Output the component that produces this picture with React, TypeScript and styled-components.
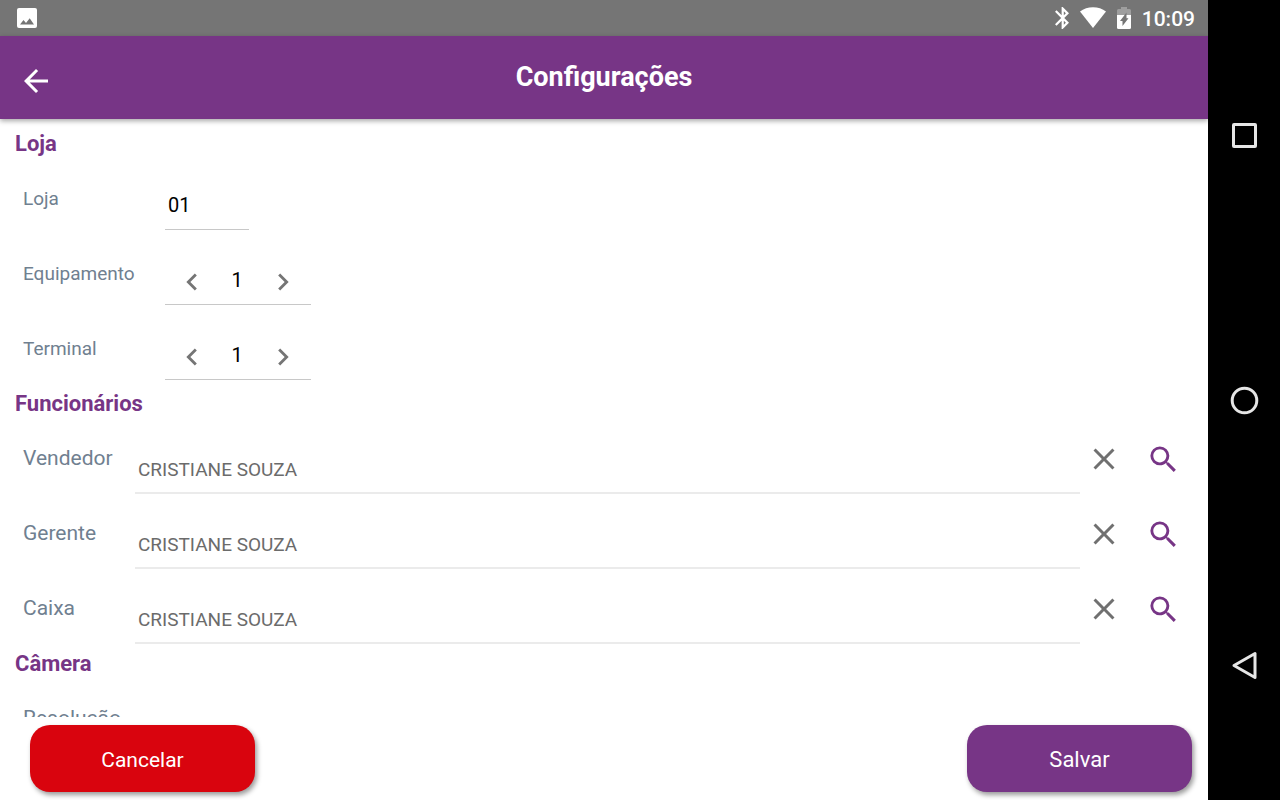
import React from "react";
import styled, { createGlobalStyle } from "styled-components";
import {
  MdArrowBack,
  MdChevronLeft,
  MdChevronRight,
  MdClose,
  MdSearch,
} from "react-icons/md";

const purple = "#773586";

const GlobalStyle = createGlobalStyle`
  * { box-sizing: border-box; }
  body { margin: 0; font-family: Roboto, "Liberation Sans", sans-serif; background: #fff; }
  button, input { font-family: inherit; margin: 0; padding: 0; border: 0; background: none; }
  button { cursor: pointer; }
  svg { display: block; }
`;

const Device = styled.div`
  display: grid;
  grid-template-columns: minmax(0, 1fr) 72px;
  height: 100vh;
`;

const Screen = styled.div`
  display: flex;
  flex-direction: column;
  min-height: 0;
  background: #fff;
`;

const StatusBar = styled.div`
  flex: none;
  display: flex;
  align-items: center;
  justify-content: space-between;
  height: 36px;
  padding: 0 13px 0 17px;
  background: #757575;
  color: #fff;
`;

const StatusIcons = styled.div`
  display: flex;
  align-items: center;
  gap: 11px;
`;

const Clock = styled.time`
  padding-top: 1px;
  font-size: 21px;
  font-weight: 500;
  line-height: 24px;
`;

const Header = styled.header`
  flex: none;
  position: relative;
  display: grid;
  grid-template-columns: 72px 1fr 72px;
  align-items: center;
  height: 83px;
  background: ${purple};
  color: #fff;
  box-shadow: 0 2px 5px rgba(0, 0, 0, 0.35);
`;

const BackButton = styled.button`
  display: flex;
  justify-content: center;
  padding-top: 6px;
  color: #fff;
`;

const Title = styled.h1`
  margin: 0 0 2px;
  text-align: center;
  font-size: 27px;
  font-weight: 700;
  line-height: 32px;
`;

const Content = styled.main`
  flex: 1;
  min-height: 0;
  overflow: hidden;
  display: flex;
  flex-direction: column;
  gap: 3px;
  padding-top: 8px;
`;

const Section = styled.section`
  flex: none;
`;

const SectionTitle = styled.h2`
  margin: 0;
  padding: 2px 0 0 15px;
  color: ${purple};
  font-size: 22px;
  font-weight: 700;
  line-height: 30px;
`;

const Row = styled.div<{ $labelWidth: number }>`
  display: grid;
  grid-template-columns: ${(p) => p.$labelWidth}px minmax(0, 1fr);
  align-items: start;
  height: 75px;
  padding-left: 23px;
`;

const RowLabel = styled.label<{ $compact?: boolean }>`
  margin-top: 27px;
  color: #708090;
  font-size: ${(p) => (p.$compact ? 19 : 21)}px;
  line-height: ${(p) => (p.$compact ? 26 : 24)}px;
`;

const StoreInput = styled.input`
  width: 84px;
  height: 50px;
  margin-top: 21px;
  padding: 0 3px;
  border-bottom: 1px solid #c8c8c8;
  border-radius: 0;
  color: #000;
  font-size: 20px;
`;

const Stepper = styled.div`
  display: grid;
  grid-template-columns: 54px 36px 56px;
  width: 146px;
  height: 50px;
  margin-top: 21px;
  border-bottom: 1px solid #c8c8c8;
`;

const StepButton = styled.button`
  display: flex;
  align-items: center;
  justify-content: center;
  padding-top: 4px;
  color: #757575;
`;

const StepInput = styled.input`
  width: 100%;
  text-align: center;
  color: #000;
  font-size: 20px;
`;

const Lookup = styled.div`
  display: flex;
  gap: 11px;
  padding-right: 21px;
`;

const LookupField = styled.div`
  flex: 1;
  display: flex;
`;

const LookupInput = styled.input`
  flex: 1;
  min-width: 0;
  height: 48px;
  margin-top: 27px;
  padding: 0 3px;
  border-bottom: 2px solid #ebebeb;
  border-radius: 0;
  color: #6b6b6b;
  font-size: 19px;
`;

const IconButton = styled.button<{ $accent?: boolean }>`
  display: flex;
  align-items: center;
  justify-content: center;
  width: 48px;
  height: 48px;
  margin-top: 16px;
  color: ${(p) => (p.$accent ? purple : "#707070")};
`;

const Footer = styled.footer`
  flex: none;
  display: flex;
  justify-content: space-between;
  padding: 8px 16px 8px 30px;
`;

const ActionButton = styled.button<{ $color: string; $size: number }>`
  width: 225px;
  height: 67px;
  padding-top: 2px;
  border-radius: 20px;
  background: ${(p) => p.$color};
  box-shadow: 2px 3px 5px rgba(0, 0, 0, 0.4);
  color: #fff;
  font-size: ${(p) => p.$size}px;
`;

const NavBar = styled.nav`
  display: flex;
  flex-direction: column;
  padding: 3px 0;
  background: #000;
`;

const NavButton = styled.button`
  flex: 1;
  display: flex;
  align-items: center;
  justify-content: center;
  color: #e6e6e6;
`;

function PictureIcon() {
  return (
    <svg width="20" height="20" viewBox="0 0 20 20" aria-hidden="true">
      <rect width="20" height="20" rx="2" fill="#fff" />
      <path d="M3 16.500l3.500-4.500 2.500 3L12.700 10.300 17 16.500z" fill="#757575" />
    </svg>
  );
}

function BluetoothIcon() {
  return (
    <svg width="14" height="22" viewBox="5 2 12.700 20" aria-hidden="true">
      <path
        d="M17.710 7.710L12 2h-1v7.590L6.410 5 5 6.410 10.590 12 5 17.590 6.410 19 11 14.410V22h1l5.710-5.710-4.300-4.290 4.300-4.290zM13 5.830l1.880 1.880L13 9.590V5.830zm1.880 10.460L13 18.170v-3.760l1.880 1.880z"
        fill="#fff"
      />
    </svg>
  );
}

function WifiIcon() {
  return (
    <svg width="26" height="22" viewBox="0 0 26 22" aria-hidden="true">
      <path d="M0 4.500C7-1.300 19-1.300 26 4.500L13 21z" fill="#fff" />
    </svg>
  );
}

function BatteryIcon() {
  return (
    <svg width="14" height="22" viewBox="0 0 14 22" aria-hidden="true">
      <path d="M0 8V3.500Q0 2 1.500 2H4V0h6v2h2.500Q14 2 14 3.500V8z" fill="#fff" fillOpacity="0.3" />
      <path d="M0 8h14v12.500Q14 22 12.500 22h-11Q0 22 0 20.500z" fill="#fff" />
      <path d="M9.500 5.500v5.800h2L5.500 19v-5H3z" fill="#757575" />
    </svg>
  );
}

function NumberRow({ id, label }: { id: string; label: string }) {
  return (
    <Row $labelWidth={142}>
      <RowLabel $compact htmlFor={id}>{label}</RowLabel>
      <Stepper>
        <StepButton type="button" aria-label={`Diminuir ${label}`}>
          <MdChevronLeft size={34} />
        </StepButton>
        <StepInput id={id} defaultValue="1" inputMode="numeric" />
        <StepButton type="button" aria-label={`Aumentar ${label}`}>
          <MdChevronRight size={34} />
        </StepButton>
      </Stepper>
    </Row>
  );
}

function EmployeeRow({ id, label }: { id: string; label: string }) {
  return (
    <Row $labelWidth={112}>
      <RowLabel htmlFor={id}>{label}</RowLabel>
      <Lookup>
        <LookupField>
          <LookupInput id={id} defaultValue="CRISTIANE SOUZA" />
          <IconButton type="button" aria-label={`Limpar ${label}`}>
            <MdClose size={36} />
          </IconButton>
        </LookupField>
        <IconButton type="button" $accent aria-label={`Buscar ${label}`}>
          <MdSearch size={35} />
        </IconButton>
      </Lookup>
    </Row>
  );
}

export default function App() {
  return (
    <>
      <GlobalStyle />
      <Device>
        <Screen>
          <StatusBar>
            <PictureIcon />
            <StatusIcons>
              <BluetoothIcon />
              <WifiIcon />
              <BatteryIcon />
              <Clock>10:09</Clock>
            </StatusIcons>
          </StatusBar>
          <Header>
            <BackButton type="button" aria-label="Voltar">
              <MdArrowBack size={36} />
            </BackButton>
            <Title>Configurações</Title>
          </Header>
          <Content>
            <Section>
              <SectionTitle>Loja</SectionTitle>
              <Row $labelWidth={142}>
                <RowLabel $compact htmlFor="loja">Loja</RowLabel>
                <StoreInput id="loja" defaultValue="01" />
              </Row>
              <NumberRow id="equipamento" label="Equipamento" />
              <NumberRow id="terminal" label="Terminal" />
            </Section>
            <Section>
              <SectionTitle>Funcionários</SectionTitle>
              <EmployeeRow id="vendedor" label="Vendedor" />
              <EmployeeRow id="gerente" label="Gerente" />
              <EmployeeRow id="caixa" label="Caixa" />
            </Section>
            <Section>
              <SectionTitle>Câmera</SectionTitle>
              <Row $labelWidth={142}>
                <RowLabel as="span">Resolução</RowLabel>
              </Row>
            </Section>
          </Content>
          <Footer>
            <ActionButton type="button" $color="#d9040e" $size={21}>Cancelar</ActionButton>
            <ActionButton type="button" $color={purple} $size={22}>Salvar</ActionButton>
          </Footer>
        </Screen>
        <NavBar aria-label="Sistema">
          <NavButton type="button" aria-label="Recentes">
            <svg width="30" height="30" viewBox="0 0 30 30">
              <rect x="4.500" y="4.500" width="22" height="22" rx="0.500" fill="none" stroke="currentColor" strokeWidth="3" />
            </svg>
          </NavButton>
          <NavButton type="button" aria-label="Início">
            <svg width="30" height="30" viewBox="0 0 30 30">
              <circle cx="15.500" cy="15.500" r="12.300" fill="none" stroke="currentColor" strokeWidth="3" />
            </svg>
          </NavButton>
          <NavButton type="button" aria-label="Voltar">
            <svg width="30" height="30" viewBox="0 0 30 30">
              <path d="M5 15.500L26 3.500v24z" fill="none" stroke="currentColor" strokeWidth="3" strokeLinejoin="round" />
            </svg>
          </NavButton>
        </NavBar>
      </Device>
    </>
  );
}
